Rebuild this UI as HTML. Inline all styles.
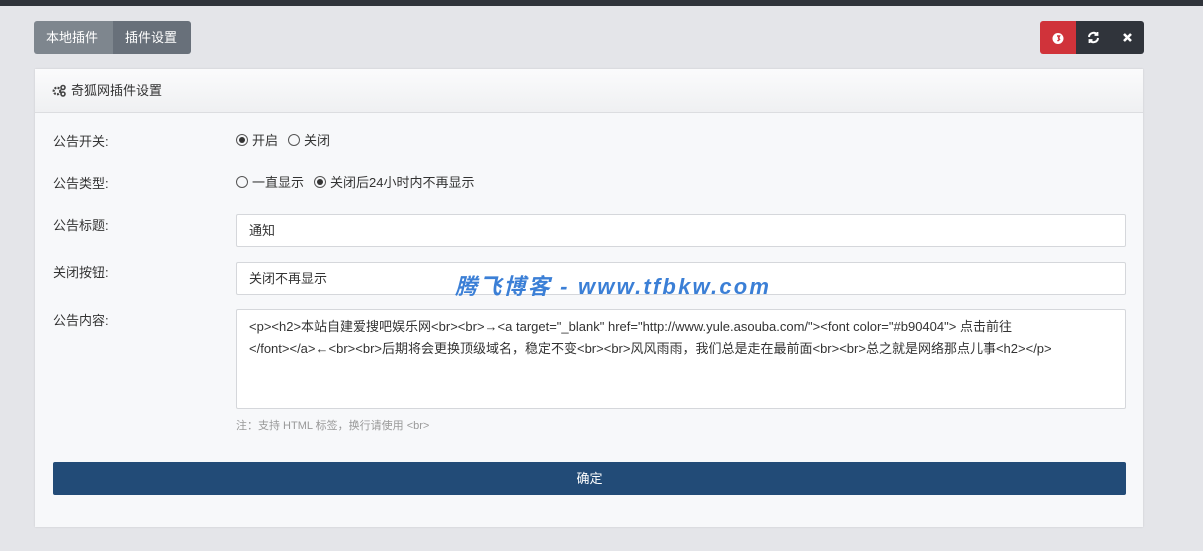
<!DOCTYPE html>
<html><head><meta charset="utf-8"><style>
*{box-sizing:border-box;margin:0;padding:0}
body{width:1203px;height:551px;background:#e4e5e9;font-family:"Liberation Sans","Noto Sans CJK SC",sans-serif;font-size:13px;color:#333;position:relative;overflow:hidden}
.top{position:absolute;left:0;top:0;width:1203px;height:6px;background:#30343b}
.tabs{position:absolute;left:34px;top:21px;height:33px;display:flex;border-radius:3px;overflow:hidden}
.tabs div{color:#fff;font-size:13px;line-height:33px;padding:0 12px}
.t1{background:#7e868e;width:79px}.t2{background:#68707a;width:78px}
.btns{position:absolute;left:1040px;top:21px;height:33px;display:flex;border-radius:3px;overflow:hidden}
.btns div{width:34px;height:33px;display:flex;align-items:center;justify-content:center;color:#fff}
.b1{background:#d0333a;width:36px!important}.b2,.b3{background:#30343b}
.card{position:absolute;left:35px;top:69px;width:1108px;height:458px;background:#f7f8fa;box-shadow:0 0 2px rgba(0,0,0,.12)}
.hd{height:44px;background:linear-gradient(#fbfbfc,#eff0f2);border-bottom:1px solid #dcdde0;padding-left:17px;line-height:42px;font-size:13px;color:#333;display:flex;align-items:center;gap:4px}
.lbl{position:absolute;left:18px;font-size:13px;color:#333}
.row{position:absolute;left:201px;display:flex;align-items:center;font-size:13px}
.rad{width:12px;height:12px;border:1px solid #555;border-radius:50%;display:inline-block;margin-right:4px;position:relative}
.rad.on::after{content:"";position:absolute;left:2px;top:2px;width:6px;height:6px;border-radius:50%;background:#333}
.inp{position:absolute;left:201px;width:890px;height:33px;background:#fff;border:1px solid #d5d7db;border-radius:2px;padding-left:12px;line-height:31px;font-size:13px}
.ta{position:absolute;left:201px;top:240px;width:890px;height:100px;background:#fff;border:1px solid #d5d7db;border-radius:2px;padding:6px 12px;font-size:13px;line-height:22px;color:#333;white-space:nowrap}
.hint{position:absolute;left:201px;top:348px;font-size:11px;color:#999}
.ok{position:absolute;left:18px;top:393px;width:1073px;height:33px;background:#224b77;border-radius:2px;color:#fff;text-align:center;line-height:33px;font-size:13px}
.wm{position:absolute;left:455px;top:269px;font-size:22px;font-weight:bold;font-style:italic;color:#3b7fd6;letter-spacing:2.2px;font-family:"Liberation Sans","Noto Sans CJK SC",sans-serif}
</style></head><body>
<div class="top"></div>
<div class="tabs"><div class="t1">本地插件</div><div class="t2">插件设置</div></div>
<div class="btns">
<div class="b1"><svg width="14" height="14" viewBox="0 0 14 14"><circle cx="7" cy="7.5" r="5.5" fill="#fff"/><path d="M6 5h2.5l-1 2 1 1.5-2 1.5" stroke="#d0333a" stroke-width="1.5" fill="none"/></svg></div>
<div class="b2"><svg width="13" height="13" viewBox="0 0 13 13" fill="none" stroke="#fff" stroke-width="2"><path d="M2 6a4.5 4.5 0 0 1 8-2.5"/><path d="M11 7a4.5 4.5 0 0 1-8 2.5"/><path d="M10.5 1v3h-3" stroke-width="1.8"/><path d="M2.5 12V9h3" stroke-width="1.8"/></svg></div>
<div class="b3"><svg width="11" height="11" viewBox="0 0 11 11" stroke="#fff" stroke-width="2.6"><path d="M2 2l7 7M9 2l-7 7"/></svg></div>
</div>
<div class="card">
<div class="hd"><svg width="15" height="13" viewBox="0 0 15 13"><circle cx="5" cy="7" r="3.3" fill="none" stroke="#444" stroke-width="2.2" stroke-dasharray="2 1.2"/><circle cx="11" cy="3.5" r="2" fill="none" stroke="#444" stroke-width="1.6"/><circle cx="11" cy="10" r="2" fill="none" stroke="#444" stroke-width="1.6"/></svg>奇狐网插件设置</div>
<div class="lbl" style="top:62px">公告开关:</div>
<div class="row" style="top:61px"><span class="rad on"></span>开启<span style="width:10px"></span><span class="rad"></span>关闭</div>
<div class="lbl" style="top:104px">公告类型:</div>
<div class="row" style="top:103px"><span class="rad"></span>一直显示<span style="width:10px"></span><span class="rad on"></span>关闭后24小时内不再显示</div>
<div class="lbl" style="top:146px">公告标题:</div>
<div class="inp" style="top:145px">通知</div>
<div class="lbl" style="top:193px">关闭按钮:</div>
<div class="inp" style="top:193px">关闭不再显示</div>
<div class="lbl" style="top:241px">公告内容:</div>
<div class="ta">&lt;p&gt;&lt;h2&gt;本站自建爱搜吧娱乐网&lt;br&gt;&lt;br&gt;→&lt;a target="_blank" href="http://www.yule.asouba.com/"&gt;&lt;font color="#b90404"&gt; 点击前往<br>&lt;/font&gt;&lt;/a&gt;←&lt;br&gt;&lt;br&gt;后期将会更换顶级域名，稳定不变&lt;br&gt;&lt;br&gt;风风雨雨，我们总是走在最前面&lt;br&gt;&lt;br&gt;总之就是网络那点儿事&lt;h2&gt;&lt;/p&gt;</div>
<div class="hint">注：支持 HTML 标签，换行请使用 &lt;br&gt;</div>
<div class="ok">确定</div>
</div>
<div class="wm">腾飞博客 - www.tfbkw.com</div>
</body></html>
